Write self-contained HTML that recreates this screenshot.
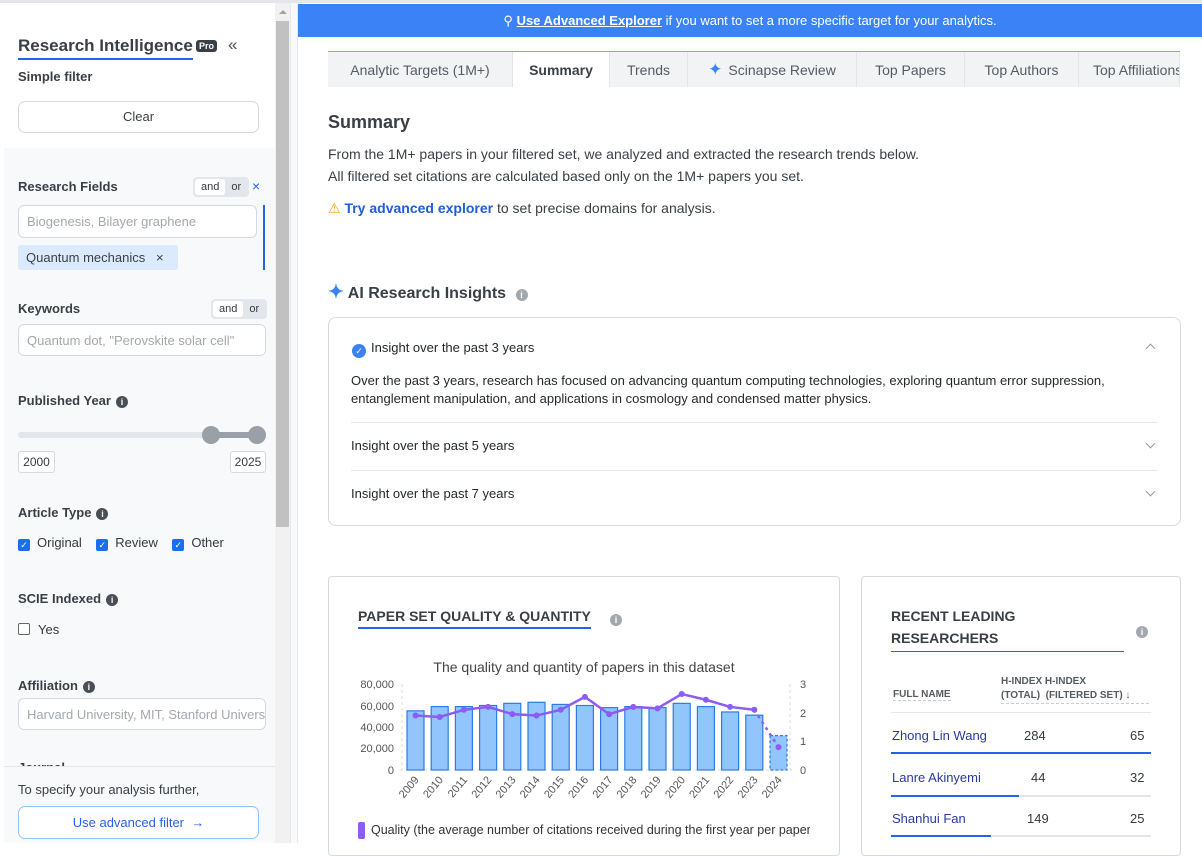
<!DOCTYPE html>
<html><head><meta charset="utf-8"><style>
*{box-sizing:border-box;margin:0;padding:0}
body{width:1202px;height:843px;overflow:hidden;background:#fff;font-family:"Liberation Sans",sans-serif;color:#343a40;position:relative}
.a{position:absolute}
.lbl{font-size:13px;font-weight:bold;color:#3a3f45}
.inp{border:1px solid #d5d9de;border-radius:6px;background:#fff;font-size:13px;color:#a3a8ae;padding:0 8px;display:flex;align-items:center;white-space:nowrap;overflow:hidden}
.info{display:inline-block;width:12px;height:12px;border-radius:50%;background:#4a4f55;color:#fff;font-size:9px;text-align:center;line-height:12px;font-weight:bold;vertical-align:0px;margin-left:5px}
.tog{font-size:11px;background:#e3e7ec;border-radius:4px;display:flex;padding:2px}
.tog span{padding:2px 6px}
.tog .on{background:#fff;border-radius:3px}
.cb{display:inline-block;width:12px;height:12px;background:#1a6ff0;border-radius:2px;color:#fff;font-size:9px;line-height:12px;text-align:center;vertical-align:-1px;margin-right:7px}
.tab{position:absolute;top:52px;height:35px;background:#f1f3f5;border-right:1px solid #e2e5e9;font-size:14px;color:#555b62;display:flex;align-items:center;justify-content:center}
.ins{font-size:13px;color:#24282d}
.hr{position:absolute;height:1px;background:#e3e6ea}
.chev{position:absolute;width:7px;height:7px;border-right:1.3px solid #999;border-bottom:1.3px solid #999}
</style></head><body>
<div class="a" style="left:0;top:0;width:1202px;height:3px;background:#e4e6ea"></div>
<!-- sidebar -->
<div class="a" style="left:4px;top:3px;width:271px;height:840px;background:#fff"></div>
<div class="a" style="left:4px;top:148px;width:271px;height:695px;background:#f8f9fb"></div>
<div class="a" style="left:275px;top:3px;width:15px;height:840px;background:#f1f1f1"></div>
<div class="a" style="left:276px;top:21px;width:13px;height:506px;background:#c1c1c1"></div>
<div class="a" style="left:279px;top:10px;width:0;height:0;border-left:4px solid transparent;border-right:4px solid transparent;border-bottom:4px solid #a3a3a3"></div>
<div class="a" style="left:290px;top:3px;width:8px;height:840px;background:#f8f9fa;border-left:1px solid #e6e8eb;border-right:1px solid #e6e8eb"></div>

<div class="a" style="left:18px;top:36px;font-size:17px;font-weight:bold;color:#3a3f45;border-bottom:2px solid #2563eb;padding-bottom:2px">Research Intelligence</div>
<div class="a" style="left:196px;top:40px;background:#3a3f45;color:#fff;font-size:9px;font-weight:bold;border-radius:3px;padding:1px 3px">Pro</div>
<div class="a" style="left:228px;top:35px;font-size:17px;color:#4a4f55">«</div>
<div class="a lbl" style="left:18px;top:69px">Simple filter</div>
<div class="a" style="left:18px;top:101px;width:241px;height:32px;border:1px solid #d5d9de;border-radius:7px;background:#fff;font-size:13px;text-align:center;line-height:30px;color:#3a3f45">Clear</div>

<div class="a lbl" style="left:18px;top:179px">Research Fields</div>
<div class="a tog" style="left:193px;top:177px"><span class="on">and</span><span>or</span></div>
<div class="a" style="left:252px;top:178px;color:#2563eb;font-size:14px">×</div>
<div class="a inp" style="left:18px;top:205px;width:239px;height:33px">Biogenesis, Bilayer graphene</div>
<div class="a" style="left:263px;top:205px;width:2px;height:65px;background:#2563eb"></div>
<div class="a" style="left:18px;top:245px;width:160px;height:25px;background:#dbeafe;border-radius:3px;font-size:13px;color:#3a3f45;line-height:25px;padding-left:8px">Quantum mechanics &nbsp;&nbsp;×</div>

<div class="a lbl" style="left:18px;top:301px">Keywords</div>
<div class="a tog" style="left:211px;top:299px"><span class="on">and</span><span>or</span></div>
<div class="a inp" style="left:18px;top:324px;width:248px;height:32px">Quantum dot, "Perovskite solar cell"</div>

<div class="a lbl" style="left:18px;top:393px">Published Year<span class="info">i</span></div>
<div class="a" style="left:18px;top:432px;width:248px;height:6px;background:#e3e6ea;border-radius:3px"></div>
<div class="a" style="left:210px;top:432px;width:48px;height:6px;background:#9aa0a8"></div>
<div class="a" style="left:202px;top:426px;width:18px;height:18px;border-radius:50%;background:#9aa0a8"></div>
<div class="a" style="left:248px;top:426px;width:18px;height:18px;border-radius:50%;background:#9aa0a8"></div>
<div class="a" style="left:18px;top:451px;width:37px;height:22px;border:1px solid #d5d9de;border-radius:3px;background:#fff;font-size:12px;text-align:center;line-height:20px">2000</div>
<div class="a" style="left:230px;top:451px;width:36px;height:22px;border:1px solid #d5d9de;border-radius:3px;background:#fff;font-size:12px;text-align:center;line-height:20px">2025</div>

<div class="a lbl" style="left:18px;top:505px">Article Type<span class="info">i</span></div>
<div class="a" style="left:18px;top:535px;font-size:13px"><span class="cb">✓</span>Original &nbsp;&nbsp;&nbsp;<span class="cb">✓</span>Review &nbsp;&nbsp;&nbsp;<span class="cb">✓</span>Other</div>

<div class="a lbl" style="left:18px;top:591px">SCIE Indexed<span class="info">i</span></div>
<div class="a" style="left:18px;top:622px;font-size:13px"><span style="display:inline-block;width:12px;height:12px;border:1px solid #666;border-radius:2px;vertical-align:-1px;margin-right:8px;background:#fff"></span>Yes</div>
<div class="a lbl" style="left:18px;top:678px">Affiliation<span class="info">i</span></div>
<div class="a inp" style="left:18px;top:698px;width:248px;height:32px">Harvard University, MIT, Stanford University</div>
<div class="a lbl" style="left:18px;top:760px">Journal</div>
<div class="a" style="left:4px;top:766px;width:271px;height:77px;background:#f8f9fb;border-top:1px solid #e3e6ea"></div>
<div class="a" style="left:18px;top:782px;font-size:13px;color:#3a3f45">To specify your analysis further,</div>
<div class="a" style="left:18px;top:806px;width:241px;height:33px;border:1px solid #93c5fd;border-radius:7px;background:#fff;font-size:13px;color:#2563eb;text-align:center;line-height:31px">Use advanced filter &nbsp;→</div>

<!-- main -->
<div class="a" style="left:298px;top:4px;width:904px;height:33px;background:#3b82f6;color:#fff;font-size:13px;text-align:center;line-height:33px">⚲ <u style="font-weight:bold">Use Advanced Explorer</u> if you want to set a more specific target for your analytics.</div>
<div class="a" style="left:328px;top:51px;width:852px;height:2px;background:#3b82f6;opacity:.7"></div>
<div class="tab" style="left:328px;width:185px">Analytic Targets (1M+)</div>
<div class="tab" style="left:513px;width:97px;background:#fff;font-weight:bold;color:#3a3f45">Summary</div>
<div class="tab" style="left:610px;width:78px">Trends</div>
<div class="tab" style="left:688px;width:169px"><span style="color:#3b82f6;margin-right:6px;font-size:17px">✦</span>Scinapse Review</div>
<div class="tab" style="left:857px;width:108px">Top Papers</div>
<div class="tab" style="left:965px;width:114px">Top Authors</div>
<div class="tab" style="left:1079px;width:101px;justify-content:flex-start;padding-left:14px;overflow:hidden;white-space:nowrap">Top Affiliations</div>

<div class="a" style="left:328px;top:112px;font-size:18px;font-weight:bold;color:#3a3f45">Summary</div>
<div class="a" style="left:328px;top:143px;font-size:14px;color:#3a3f45;line-height:22px">From the 1M+ papers in your filtered set, we analyzed and extracted the research trends below.<br>All filtered set citations are calculated based only on the 1M+ papers you set.</div>
<div class="a" style="left:328px;top:200px;font-size:14px;color:#3a3f45"><span style="color:#f5a524">⚠</span> <b style="color:#1d5ed8">Try advanced explorer</b> to set precise domains for analysis.</div>

<div class="a" style="left:328px;top:281px;font-size:16px;font-weight:bold;color:#3a3f45"><span style="color:#3b82f6;font-size:19px">✦</span> AI Research Insights <span class="info" style="background:#a3a8ae">i</span></div>
<div class="a" style="left:328px;top:317px;width:853px;height:209px;border:1px solid #d5d9de;border-radius:8px"></div>
<div class="a ins" style="left:352px;top:340px"><span style="display:inline-block;width:14px;height:14px;border-radius:50%;background:#3b82f6;color:#fff;font-size:9px;text-align:center;line-height:14px;vertical-align:-2px;margin-right:5px">✓</span>Insight over the past 3 years</div>
<div class="chev" style="left:1147px;top:345px;transform:rotate(-135deg)"></div>
<div class="ins a" style="left:351px;top:372px;line-height:18px;width:800px">Over the past 3 years, research has focused on advancing quantum computing technologies, exploring quantum error suppression, entanglement manipulation, and applications in cosmology and condensed matter physics.</div>
<div class="hr" style="left:351px;top:422px;width:806px"></div>
<div class="a ins" style="left:351px;top:438px">Insight over the past 5 years</div>
<div class="chev" style="left:1147px;top:440px;transform:rotate(45deg)"></div>
<div class="hr" style="left:351px;top:470px;width:806px"></div>
<div class="a ins" style="left:351px;top:486px">Insight over the past 7 years</div>
<div class="chev" style="left:1147px;top:488px;transform:rotate(45deg)"></div>

<!-- chart card -->
<div class="a" style="left:328px;top:576px;width:512px;height:280px;border:1px solid #d5d9de;border-radius:4px"></div>
<div class="a" style="left:358px;top:608px;font-size:14px;font-weight:bold;color:#3a3f45;border-bottom:2px solid #2563eb;padding-bottom:3px">PAPER SET QUALITY &amp; QUANTITY</div>
<div class="a" style="left:605px;top:610px"><span class="info" style="background:#a3a8ae">i</span></div>
<svg class="a" style="left:330px;top:650px" width="480" height="193" font-family="Liberation Sans" font-size="11" fill="#555">
<text x="254" y="22" text-anchor="middle" font-size="14" fill="#444">The quality and quantity of papers in this dataset</text>
<g text-anchor="end"><text x="64" y="38">80,000</text><text x="64" y="60">60,000</text><text x="64" y="81">40,000</text><text x="64" y="102">20,000</text><text x="64" y="124">0</text></g>
<g><text x="470" y="38">3</text><text x="470" y="67">2</text><text x="470" y="95">1</text><text x="470" y="124">0</text></g>
<line x1="70" y1="120" x2="462" y2="120" stroke="#ddd" stroke-dasharray="3,3"/>
<line x1="72" y1="34" x2="72" y2="120" stroke="#ddd" stroke-dasharray="3,3"/>
<line x1="460" y1="34" x2="460" y2="120" stroke="#ddd" stroke-dasharray="3,3"/>
<g fill="#93c5fd" stroke="#2b7be8" stroke-width="1.2" id="bars"></g>
<polyline id="ln" fill="none" stroke="#8b5cf6" stroke-width="2.5"/>
<g id="pts" fill="#8b5cf6"></g>
<g id="yrs" font-size="11" fill="#555"></g>
<rect x="28" y="172" width="7" height="17" rx="2" fill="#8b5cf6"/>
<text x="41" y="184" font-size="12.5" fill="#333">Quality (the average number of citations received during the first year per paper)</text>
</svg>
<script>
var b=[55,59,59,60,62,63,61,60,58,59,58,62,59,54,51,32],q=[1.9,1.85,2.1,2.2,1.95,1.9,2.1,2.55,1.95,2.2,2.15,2.65,2.45,2.2,2.1,0.8];
var s="",p=[],c="",y="";
for(var i=0;i<16;i++){var x=77+i*24.2,h=b[i]/80*86;s+='<rect x="'+x+'" y="'+(120-h)+'" width="17" height="'+h+'"'+(i==15?' stroke-dasharray="3,2"':'')+'/>';
var cx=x+8.5,cy=120-q[i]/3*86;if(i<15)p.push(cx+","+cy);c+='<circle cx="'+cx+'" cy="'+cy+'" r="3"/>';
y+='<text transform="translate('+(cx+4)+',130) rotate(-50)" text-anchor="end">'+(2009+i)+'</text>';}
document.getElementById("bars").innerHTML=s;document.getElementById("ln").setAttribute("points",p.join(" "));
document.getElementById("pts").innerHTML=c+'<line x1="'+p[14].split(",")[0]+'" y1="'+p[14].split(",")[1]+'" x2="'+(77+15*24.2+8.5)+'" y2="'+(120-0.8/3*86)+'" stroke="#8b5cf6" stroke-width="2.5" stroke-dasharray="3,4"/>';
document.getElementById("yrs").innerHTML=y;
</script>

<!-- researchers card -->
<div class="a" style="left:861px;top:576px;width:320px;height:280px;border:1px solid #d5d9de;border-radius:4px"></div>
<div class="a" style="left:891px;top:605px;width:233px;font-size:14px;font-weight:bold;color:#3a3f45;line-height:22px;border-bottom:1px solid #2563eb;padding-bottom:2px">RECENT LEADING<br>RESEARCHERS</div>
<div class="a" style="left:1131px;top:622px"><span class="info" style="background:#a3a8ae">i</span></div>
<div class="a" style="left:893px;top:689px;font-size:10px;font-weight:bold;color:#555b62;border-bottom:1px dashed #ccc">FULL NAME</div>
<div class="a" style="left:1001px;top:675px;font-size:10px;font-weight:bold;color:#555b62;line-height:14px;border-bottom:1px dashed #ccc;width:148px">H-INDEX H-INDEX<br>(TOTAL)&nbsp; (FILTERED SET) ↓</div>
<div class="hr" style="left:891px;top:712px;width:260px"></div>
<div class="a" style="left:892px;top:728px;font-size:13px;color:#2a3a9c">Zhong Lin Wang</div>
<div class="a" style="left:1024px;top:728px;font-size:13px">284</div><div class="a" style="left:1130px;top:728px;font-size:13px">65</div>
<div class="a" style="left:891px;top:752px;width:260px;height:2px;background:#2563eb"></div>
<div class="a" style="left:892px;top:770px;font-size:13px;color:#2a3a9c">Lanre Akinyemi</div>
<div class="a" style="left:1031px;top:770px;font-size:13px">44</div><div class="a" style="left:1130px;top:770px;font-size:13px">32</div>
<div class="a" style="left:891px;top:795px;width:260px;height:2px;background:#e3e6ea"></div><div class="a" style="left:891px;top:795px;width:128px;height:2px;background:#2563eb"></div>
<div class="a" style="left:892px;top:811px;font-size:13px;color:#2a3a9c">Shanhui Fan</div>
<div class="a" style="left:1027px;top:811px;font-size:13px">149</div><div class="a" style="left:1130px;top:811px;font-size:13px">25</div>
<div class="a" style="left:891px;top:835px;width:260px;height:2px;background:#e3e6ea"></div><div class="a" style="left:891px;top:835px;width:100px;height:2px;background:#2563eb"></div>
</body></html>
